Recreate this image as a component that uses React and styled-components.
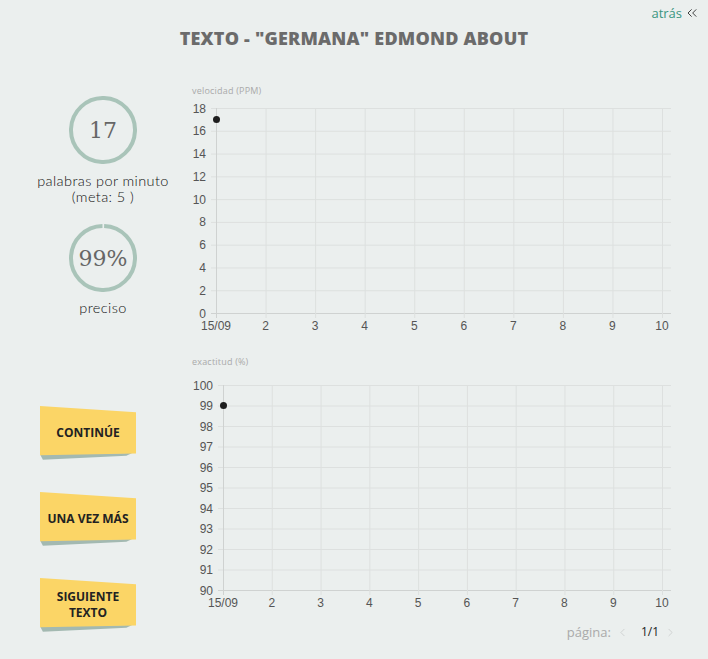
import React from "react";
import styled, { createGlobalStyle } from "styled-components";
import { ChevronsLeft, ChevronLeft, ChevronRight } from "lucide-react";

const GlobalStyle = createGlobalStyle`
  html, body {
    margin: 0;
    background: #ebefee;
  }
  body {
    font-family: "Open Sans", "Liberation Sans", sans-serif;
    color: #333;
  }
`;

const Page = styled.div`
  width: 708px;
  min-height: 659px;
  box-sizing: border-box;
`;

const TopBar = styled.div`
  display: flex;
  justify-content: flex-end;
  padding: 5px 8px 0 0;
  height: 21px;
  box-sizing: border-box;
`;

const BackLink = styled.a`
  display: flex;
  align-items: center;
  gap: 2px;
  font-size: 13px;
  line-height: 16px;
  color: #3a9580;
  text-decoration: none;
  cursor: pointer;
  svg {
    color: #333;
  }
`;

const Title = styled.h1`
  margin: 5px 0 0;
  text-align: center;
  font-family: "Open Sans", sans-serif;
  font-weight: 800;
  font-size: 18px;
  line-height: 24px;
  letter-spacing: 0.2px;
  color: #6b6b6b;
  text-transform: uppercase;
`;

const Main = styled.div`
  display: grid;
  grid-template-columns: 185px 490px;
  align-items: start;
  row-gap: 16px;
  margin-top: 35px;
`;

const StatsCol = styled.div`
  display: flex;
  flex-direction: column;
  align-items: center;
  padding: 11px 0 0 21px;
`;

const Ring = styled.div`
  display: grid;
  width: 68px;
  height: 68px;
  margin-top: ${(p) => p.$top || 0}px;
  & > * {
    grid-area: 1 / 1;
  }
`;

const RingValue = styled.span`
  align-self: center;
  justify-self: center;
  font-family: "DejaVu Serif", serif;
  font-size: 22px;
  color: #666;
`;

const Caption = styled.div`
  margin-top: ${(p) => p.$top}px;
  font-family: Lato, "Open Sans", sans-serif;
  font-weight: 300;
  font-size: 14.5px;
  line-height: 16px;
  letter-spacing: 0.4px;
  text-align: center;
  color: #111;
`;

const ButtonCol = styled.div`
  display: flex;
  flex-direction: column;
  gap: 30px;
  padding: 50px 0 0 40px;
`;

const PaperButton = styled.button`
  position: relative;
  width: 96px;
  height: 56px;
  padding: 0 0 3px;
  border: none;
  background: transparent;
  font-family: "Open Sans", sans-serif;
  font-weight: 700;
  font-size: 12px;
  line-height: 16px;
  color: #222;
  text-transform: uppercase;
  cursor: pointer;
  &::before {
    content: "";
    position: absolute;
    inset: 0;
    background: #a3b9b1;
    clip-path: polygon(0 86%, 96% 84%, 90% 89%, 3% 96%);
  }
  &::after {
    content: "";
    position: absolute;
    inset: 0;
    background: #fbd566;
    clip-path: polygon(0 0, 100% 11%, 100% 85%, 0 88%);
  }
  span {
    position: relative;
    z-index: 1;
  }
`;

const RightCol = styled.div`
  display: flex;
  flex-direction: column;
`;

const ChartBlock = styled.div`
  display: flex;
  flex-direction: column;
`;

const ChartLabel = styled.div`
  font-size: 9px;
  line-height: 12px;
  letter-spacing: 0.2px;
  color: #aaa;
  padding-left: 7px;
  margin-bottom: ${(p) => p.$gap}px;
`;

const Pager = styled.div`
  display: flex;
  align-items: center;
  justify-content: flex-end;
  gap: 5px;
  padding-top: 6px;
  margin-right: -2px;
  font-size: 13px;
  line-height: 18px;
  color: #aaa;
  svg {
    color: #c4c8c7;
  }
`;

const PageNum = styled.span`
  font-size: 12px;
  color: #222;
  padding-left: 7px;
`;

const Chart = ({ label, gap, plotLeft, yMin, yMax, yStep, value }) => {
  const W = 490;
  const H = 240;
  const top = 8;
  const bottom = 213;
  const right = 486;
  const xEnd = 477;
  const xLabels = ["15/09", "2", "3", "4", "5", "6", "7", "8", "9", "10"];
  const xStep = (xEnd - plotLeft) / 9;
  const yTicks = [];
  for (let v = yMin; v <= yMax; v += yStep) yTicks.push(v);
  const yPos = (v) => bottom - ((v - yMin) / (yMax - yMin)) * (bottom - top);

  return (
    <ChartBlock>
      <ChartLabel $gap={gap}>{label}</ChartLabel>
      <svg width={W} height={H}>
        {yTicks.map((v) => (
          <g key={v}>
            <line
              x1={plotLeft - 5}
              x2={right}
              y1={yPos(v) + 0.5}
              y2={yPos(v) + 0.5}
              stroke={v === yMin ? "#cfd2d1" : "#dde0df"}
            />
            <text
              x={plotLeft - 10}
              y={yPos(v) + 4.5}
              textAnchor="end"
              fontFamily="Liberation Sans, sans-serif"
              fontSize="12"
              fill="#555"
            >
              {v}
            </text>
          </g>
        ))}
        {xLabels.map((l, i) => {
          const x = plotLeft + i * xStep;
          return (
            <g key={l}>
              <line
                x1={x + 0.5}
                x2={x + 0.5}
                y1={top}
                y2={bottom + 5}
                stroke={i === 0 ? "#cfd2d1" : "#dde0df"}
              />
              <text
                x={x}
                y={bottom + 17}
                textAnchor="middle"
                fontFamily="Liberation Sans, sans-serif"
                fontSize="12"
                fill="#555"
              >
                {l}
              </text>
            </g>
          );
        })}
        <circle cx={plotLeft + 0.5} cy={yPos(value)} r="3.5" fill="#1e1e1e" />
      </svg>
    </ChartBlock>
  );
};

const Gauge = ({ value, percent, top }) => {
  const r = 32;
  const c = 2 * Math.PI * r;
  return (
    <Ring $top={top}>
      <svg width="68" height="68" viewBox="0 0 68 68">
        <circle
          cx="34"
          cy="34"
          r={r}
          fill="none"
          stroke="#a9c4b9"
          strokeWidth="4"
          strokeDasharray={`${(c * percent) / 100} ${c}`}
          transform="rotate(-88 34 34)"
        />
      </svg>
      <RingValue>{value}</RingValue>
    </Ring>
  );
};

export default function App() {
  return (
    <Page>
      <GlobalStyle />
      <TopBar>
        <BackLink>
          atrás <ChevronsLeft size={16} strokeWidth={1.4} />
        </BackLink>
      </TopBar>
      <Title>Texto - "Germana" Edmond About</Title>
      <Main>
        <StatsCol>
          <Gauge value="17" percent={100} />
          <Caption $top={9}>
            palabras por minuto
            <br />
            (meta: 5 )
          </Caption>
          <Gauge value="99%" percent={99} top={19} />
          <Caption $top={8}>preciso</Caption>
        </StatsCol>
        <Chart
          label="velocidad (PPM)"
          gap={3}
          plotLeft={31}
          yMin={0}
          yMax={18}
          yStep={2}
          value={17}
        />
        <ButtonCol>
          <PaperButton>
            <span>Continúe</span>
          </PaperButton>
          <PaperButton>
            <span>Una vez más</span>
          </PaperButton>
          <PaperButton>
            <span>
              Siguiente
              <br />
              texto
            </span>
          </PaperButton>
        </ButtonCol>
        <RightCol>
          <Chart
            label="exactitud (%)"
            gap={9}
            plotLeft={38}
            yMin={90}
            yMax={100}
            yStep={1}
            value={99}
          />
          <Pager>
            página:
            <ChevronLeft size={13} strokeWidth={1.3} />
            <PageNum>1/1</PageNum>
            <ChevronRight size={13} strokeWidth={1.3} />
          </Pager>
        </RightCol>
      </Main>
    </Page>
  );
}
